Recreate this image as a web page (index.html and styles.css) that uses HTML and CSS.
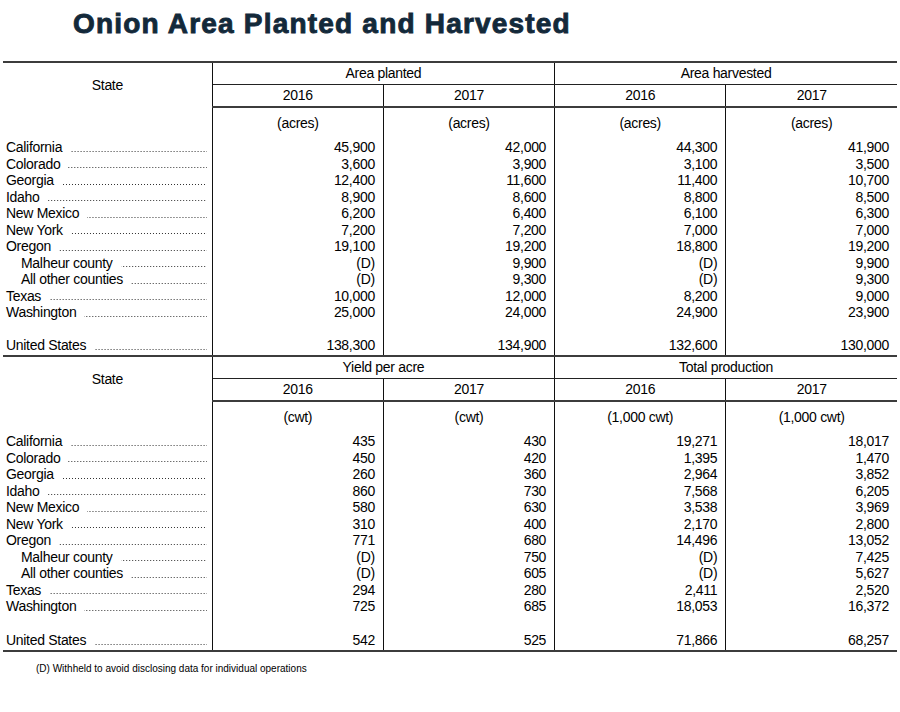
FILE: index.html
```html
<!DOCTYPE html>
<html>
<head>
<meta charset="utf-8">
<link rel="stylesheet" href="styles.css">
</head>
<body>
<div class="title">Onion Area Planted and Harvested</div>
<table class="tbl">
<colgroup><col class="cs"><col class="cn"><col class="cn"><col class="cn"><col class="cn"></colgroup>
<tbody class="sec">
<tr class="h1"><th rowspan="2" class="state">State</th><th colspan="2" class="grp gl">Area planted</th><th colspan="2" class="grp">Area harvested</th></tr>
<tr class="h2"><th class="v1">2016</th><th class="v2">2017</th><th class="v1">2016</th><th>2017</th></tr>
<tr class="units"><td class="lb"></td><td class="v1">(acres)</td><td class="v2">(acres)</td><td class="v1">(acres)</td><td>(acres)</td></tr>
<tr><td class="lb"><div class="lab"><span>California</span><i></i></div></td><td class="n v1">45,900</td><td class="n v2">42,000</td><td class="n v1">44,300</td><td class="n">41,900</td></tr>
<tr><td class="lb"><div class="lab"><span>Colorado</span><i></i></div></td><td class="n v1">3,600</td><td class="n v2">3,900</td><td class="n v1">3,100</td><td class="n">3,500</td></tr>
<tr><td class="lb"><div class="lab"><span>Georgia</span><i></i></div></td><td class="n v1">12,400</td><td class="n v2">11,600</td><td class="n v1">11,400</td><td class="n">10,700</td></tr>
<tr><td class="lb"><div class="lab"><span>Idaho</span><i></i></div></td><td class="n v1">8,900</td><td class="n v2">8,600</td><td class="n v1">8,800</td><td class="n">8,500</td></tr>
<tr><td class="lb"><div class="lab"><span>New Mexico</span><i></i></div></td><td class="n v1">6,200</td><td class="n v2">6,400</td><td class="n v1">6,100</td><td class="n">6,300</td></tr>
<tr><td class="lb"><div class="lab"><span>New York</span><i></i></div></td><td class="n v1">7,200</td><td class="n v2">7,200</td><td class="n v1">7,000</td><td class="n">7,000</td></tr>
<tr><td class="lb"><div class="lab"><span>Oregon</span><i></i></div></td><td class="n v1">19,100</td><td class="n v2">19,200</td><td class="n v1">18,800</td><td class="n">19,200</td></tr>
<tr><td class="lb"><div class="lab ind"><span>Malheur county</span><i></i></div></td><td class="n v1">(D)</td><td class="n v2">9,900</td><td class="n v1">(D)</td><td class="n">9,900</td></tr>
<tr><td class="lb"><div class="lab ind"><span>All other counties</span><i></i></div></td><td class="n v1">(D)</td><td class="n v2">9,300</td><td class="n v1">(D)</td><td class="n">9,300</td></tr>
<tr><td class="lb"><div class="lab"><span>Texas</span><i></i></div></td><td class="n v1">10,000</td><td class="n v2">12,000</td><td class="n v1">8,200</td><td class="n">9,000</td></tr>
<tr><td class="lb"><div class="lab"><span>Washington</span><i></i></div></td><td class="n v1">25,000</td><td class="n v2">24,000</td><td class="n v1">24,900</td><td class="n">23,900</td></tr>
<tr class="blank"><td class="lb"></td><td class="v1"></td><td class="v2"></td><td class="v1"></td><td></td></tr>
<tr class="total"><td class="lb"><div class="lab"><span>United States</span><i></i></div></td><td class="n v1">138,300</td><td class="n v2">134,900</td><td class="n v1">132,600</td><td class="n">130,000</td></tr>
</tbody>
<tbody class="sec sec2">
<tr class="h1"><th rowspan="2" class="state">State</th><th colspan="2" class="grp gl">Yield per acre</th><th colspan="2" class="grp">Total production</th></tr>
<tr class="h2"><th class="v1">2016</th><th class="v2">2017</th><th class="v1">2016</th><th>2017</th></tr>
<tr class="units"><td class="lb"></td><td class="v1">(cwt)</td><td class="v2">(cwt)</td><td class="v1">(1,000 cwt)</td><td>(1,000 cwt)</td></tr>
<tr><td class="lb"><div class="lab"><span>California</span><i></i></div></td><td class="n v1">435</td><td class="n v2">430</td><td class="n v1">19,271</td><td class="n">18,017</td></tr>
<tr><td class="lb"><div class="lab"><span>Colorado</span><i></i></div></td><td class="n v1">450</td><td class="n v2">420</td><td class="n v1">1,395</td><td class="n">1,470</td></tr>
<tr><td class="lb"><div class="lab"><span>Georgia</span><i></i></div></td><td class="n v1">260</td><td class="n v2">360</td><td class="n v1">2,964</td><td class="n">3,852</td></tr>
<tr><td class="lb"><div class="lab"><span>Idaho</span><i></i></div></td><td class="n v1">860</td><td class="n v2">730</td><td class="n v1">7,568</td><td class="n">6,205</td></tr>
<tr><td class="lb"><div class="lab"><span>New Mexico</span><i></i></div></td><td class="n v1">580</td><td class="n v2">630</td><td class="n v1">3,538</td><td class="n">3,969</td></tr>
<tr><td class="lb"><div class="lab"><span>New York</span><i></i></div></td><td class="n v1">310</td><td class="n v2">400</td><td class="n v1">2,170</td><td class="n">2,800</td></tr>
<tr><td class="lb"><div class="lab"><span>Oregon</span><i></i></div></td><td class="n v1">771</td><td class="n v2">680</td><td class="n v1">14,496</td><td class="n">13,052</td></tr>
<tr><td class="lb"><div class="lab ind"><span>Malheur county</span><i></i></div></td><td class="n v1">(D)</td><td class="n v2">750</td><td class="n v1">(D)</td><td class="n">7,425</td></tr>
<tr><td class="lb"><div class="lab ind"><span>All other counties</span><i></i></div></td><td class="n v1">(D)</td><td class="n v2">605</td><td class="n v1">(D)</td><td class="n">5,627</td></tr>
<tr><td class="lb"><div class="lab"><span>Texas</span><i></i></div></td><td class="n v1">294</td><td class="n v2">280</td><td class="n v1">2,411</td><td class="n">2,520</td></tr>
<tr><td class="lb"><div class="lab"><span>Washington</span><i></i></div></td><td class="n v1">725</td><td class="n v2">685</td><td class="n v1">18,053</td><td class="n">16,372</td></tr>
<tr class="blank"><td class="lb"></td><td class="v1"></td><td class="v2"></td><td class="v1"></td><td></td></tr>
<tr class="total"><td class="lb"><div class="lab"><span>United States</span><i></i></div></td><td class="n v1">542</td><td class="n v2">525</td><td class="n v1">71,866</td><td class="n">68,257</td></tr>
</tbody>
</table>
<div class="note">(D) Withheld to avoid disclosing data for individual operations</div>
</body>
</html>
```
FILE: styles.css
```css
html, body {
  margin: 0;
  padding: 0;
  background: #fff;
}
body {
  width: 900px;
  height: 712px;
  overflow: hidden;
  font-family: "Liberation Sans", Arial, sans-serif;
  color: #000;
}
.title {
  box-sizing: border-box;
  height: 61px;
  padding: 2px 0 0 73px;
  font-size: 28px;
  line-height: 44px;
  font-weight: bold;
  letter-spacing: 1.2px;
  color: #13293a;
  -webkit-text-stroke: 0.9px #13293a;
}
.tbl {
  margin-left: 3px;
  width: 894px;
  border-collapse: collapse;
  table-layout: fixed;
  font-size: 14px;
  letter-spacing: -0.3px;
}
.cs { width: 209px; }
.cn { width: 171px; }
.tbl th, .tbl td {
  padding: 0;
  font-weight: normal;
  text-align: center;
  white-space: nowrap;
}
.sec > tr > td {
  height: 16.5px;
  line-height: 16.5px;
}
.sec > tr.h1 > th {
  height: 21px;
  border-top: 2px solid #3c3c3c;
  line-height: 21px;
}
.sec > tr.h2 > th {
  height: 21px;
  line-height: 21px;
  border-bottom: 2px solid #3c3c3c;
}
.sec > tr.units > td {
  height: 30px;
  line-height: 17px;
  vertical-align: middle;
  padding-bottom: 1px;
}
.sec > tr.total > td {
  height: 18px;
  vertical-align: top;
  line-height: 17px;
  border-bottom: 2px solid #3c3c3c;
}
.sec2 > tr.total > td {
  height: 19px;
  line-height: 18px;
}
.tbl th.grp { border-bottom: 1px solid #222; }
.tbl .gl, .tbl .state, .tbl .lb, .tbl .v1, .tbl .v2 { border-right: 1px solid #111; }
.tbl td.lb { text-align: left; }
.tbl td.n {
  text-align: right;
  padding-right: 8px;
}
.lab {
  display: flex;
  align-items: flex-end;
  padding-left: 3px;
  padding-right: 5px;
}
.lab.ind { padding-left: 18px; }
.lab span { flex: none; }
.lab i {
  flex: 1;
  height: 1px;
  margin: 0 0 4px 8px;
  background-image: linear-gradient(to right, #333 1px, transparent 1px);
  background-size: 3px 1px;
  background-repeat: repeat-x;
  background-position: right bottom;
}
.note {
  margin: 11px 0 0 36px;
  font-size: 10px;
  line-height: 12px;
}
```
